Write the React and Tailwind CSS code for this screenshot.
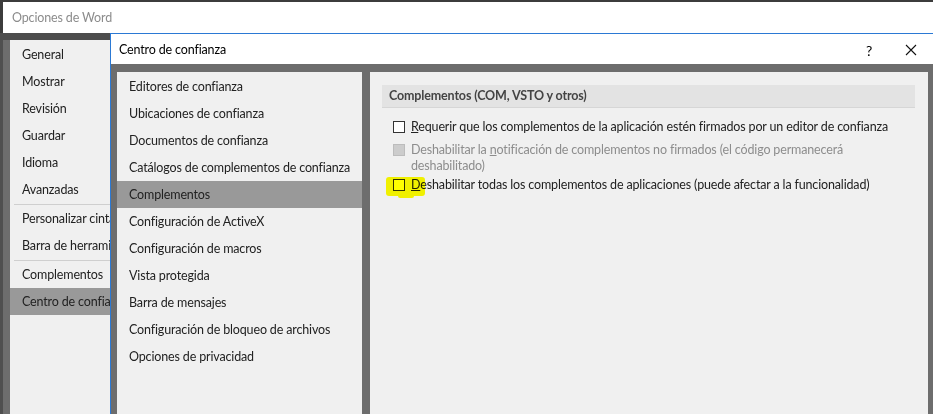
import React from "react";

const navTop = ["General", "Mostrar", "Revisión", "Guardar", "Idioma", "Avanzadas"];
const navMid = ["Personalizar cinta de opciones", "Barra de herramientas de acceso rápido"];
const navBottom = ["Complementos", "Centro de confianza"];

const trustItems = [
  "Editores de confianza",
  "Ubicaciones de confianza",
  "Documentos de confianza",
  "Catálogos de complementos de confianza",
  "Complementos",
  "Configuración de ActiveX",
  "Configuración de macros",
  "Vista protegida",
  "Barra de mensajes",
  "Configuración de bloqueo de archivos",
  "Opciones de privacidad",
];

const NavItem = ({ label, selected }) => (
  <div
    className={`h-[27px] flex items-center pl-3 pt-[2px] whitespace-nowrap ${
      selected ? "bg-[#999999]" : ""
    }`}
  >
    {label}
  </div>
);

const Separator = () => (
  <div className="h-[2px] flex items-center pl-1">
    <div className="h-px w-full bg-[#cfcfcf]" />
  </div>
);

const App = () => {
  return (
    <div
      className="w-[933px] h-[414px] overflow-hidden flex flex-col bg-[#6d6d6d] text-[12.5px] tracking-[-0.15px] text-[#222]"
      style={{ fontFamily: '"Segoe UI", Lato, "Noto Sans", sans-serif' }}
    >
      {/* Opciones de Word title bar */}
      <div className="h-[33px] shrink-0 border-t-[2px] border-l-[3px] border-[#3c3c3c] bg-white flex items-center pl-[9px] pt-[2px] text-[#8c8c8c]">
        Opciones de Word
      </div>

      <div className="flex flex-1 min-h-0">
        {/* outer window left nav */}
        <div className="w-[110px] shrink-0 flex flex-col">
          <div className="h-[7px] bg-[#4d4d4d]" />
          <div className="flex flex-1">
            <div className="w-[10px] border-l-[3px] border-[#4f4f4f] bg-[#6d6d6d]" />
            <div className="flex-1 bg-[#f0f0f0] pt-px overflow-hidden">
              {navTop.map((l) => (
                <NavItem key={l} label={l} />
              ))}
              <Separator />
              {navMid.map((l) => (
                <NavItem key={l} label={l} />
              ))}
              <Separator />
              {navBottom.map((l) => (
                <NavItem key={l} label={l} selected={l === "Centro de confianza"} />
              ))}
            </div>
          </div>
        </div>

        {/* Centro de confianza dialog */}
        <div className="flex-1 flex flex-col border-t border-l border-[#2b79d4] min-w-0">
          <div className="h-[30px] shrink-0 bg-white flex items-center pl-2 pt-[2px] text-black">
            <span className="flex-1">Centro de confianza</span>
            <span className="w-[20px] text-center mr-[26px] text-[14px]">?</span>
            <svg width="12" height="12" viewBox="0 0 12 12" className="mr-[16px]">
              <path d="M1 1 L11 11 M11 1 L1 11" stroke="#111" strokeWidth="1.1" />
            </svg>
          </div>

          <div className="flex-1 flex gap-2 pt-2 pl-[6px] pr-[5px] bg-[#6d6d6d] min-h-0">
            {/* category list */}
            <div className="w-[245px] shrink-0 bg-[#f0f0f0] pt-[1px]">
              {trustItems.map((t) => (
                <NavItem key={t} label={t} selected={t === "Complementos"} />
              ))}
            </div>

            {/* content */}
            <div className="flex-1 bg-[#f0f0f0] pt-[13px] pl-3 pr-[13px]">
              <div className="h-[23px] bg-[#e3e3e3] border-b border-[#d6d6d6] flex items-center pl-[7px] pt-px font-bold text-[#444]">
                Complementos (COM, VSTO y otros)
              </div>

              <div className="pl-[11px] pt-[11px] flex flex-col whitespace-nowrap">
                <div className="flex items-start gap-[6px] leading-[16px]">
                  <div className="w-[12px] h-[12px] mt-[2px] shrink-0 border border-[#333] bg-white" />
                  <span>
                    <span className="underline">R</span>equerir que los complementos de la aplicación estén firmados por un editor de confianza
                  </span>
                </div>

                <div className="flex items-start gap-[6px] leading-[16px] mt-[7px] text-[#8d8d8d]">
                  <div className="w-[12px] h-[12px] mt-[2px] shrink-0 border border-[#bcbcbc] bg-[#cccccc]" />
                  <span>
                    Deshabilitar la <span className="underline">n</span>otificación de complementos no firmados (el código permanecerá
                    <br />
                    deshabilitado)
                  </span>
                </div>

                <div className="relative flex items-start gap-[6px] leading-[16px] mt-[3px]">
                  <div className="w-[12px] h-[12px] mt-[2px] shrink-0 border border-[#333] bg-white" />
                  <span>
                    <span className="underline">D</span>eshabilitar todas los complementos de aplicaciones (puede afectar a la funcionalidad)
                  </span>
                  <div className="absolute left-[-7px] top-[0px] w-[39px] h-[19px] rounded-[3px] bg-[#ffff00] mix-blend-multiply" />
                  <div className="absolute left-[5px] top-[17px] w-[16px] h-[4px] rounded-b-[2px] bg-[#ffff00] mix-blend-multiply" />
                </div>
              </div>
            </div>
          </div>
        </div>
      </div>
    </div>
  );
};

export default App;
